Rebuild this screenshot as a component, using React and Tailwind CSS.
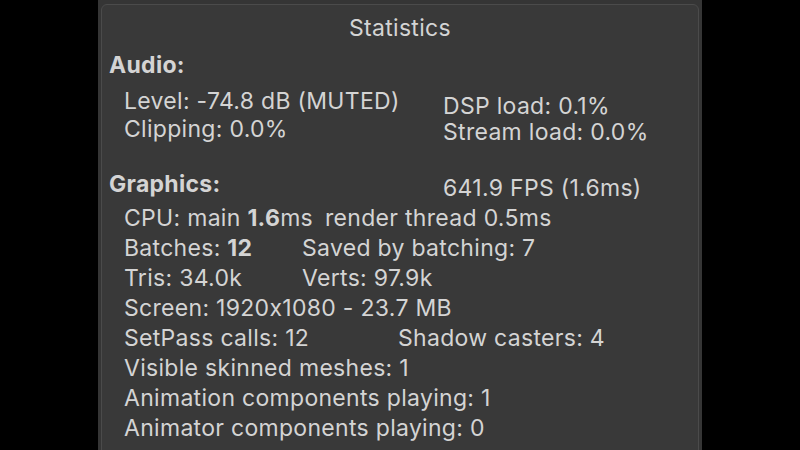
const Row = ({ children, className = "" }) => (
  <div className={`flex whitespace-nowrap ${className}`}>{children}</div>
);

const App = () => {
  return (
    <div className="h-[450px] w-[800px] bg-black overflow-hidden">
      <div className="mx-auto h-full w-[604px] bg-[#353535] px-[3px] pt-[4px]">
        <div
          className="h-[460px] rounded-[6px] border border-[#4b4b4b] bg-[#393939] text-[#d4d4d4] text-[23px] tracking-[0.3px] [font-feature-settings:'calt'_0]"
          style={{ fontFamily: "Inter, 'Noto Sans', sans-serif" }}
        >
          <div className="text-center leading-[44px] pt-[1px]">Statistics</div>

          <div className="pl-[7px] font-bold leading-[34px] -mt-[2px]">Audio:</div>
          <div className="flex pl-[22px] pt-[5px]">
            <div className="w-[319px] leading-[28px]">
              <Row>Level: -74.8 dB (MUTED)</Row>
              <Row>Clipping: 0.0%</Row>
            </div>
            <div className="pt-[6px] leading-[26px]">
              <Row>DSP load: 0.1%</Row>
              <Row>Stream load: 0.0%</Row>
            </div>
          </div>

          <div className="flex mt-[24px] leading-[30px]">
            <div className="pl-[7px] font-bold w-[341px]">Graphics:</div>
            <div className="pt-[4px]">641.9 FPS (1.6ms)</div>
          </div>
          <div className="pl-[22px] leading-[30px]">
            <Row>
              <span>
                CPU: main <span className="font-bold">1.6</span>ms
              </span>
              <span className="ml-[12px]">render thread 0.5ms</span>
            </Row>
            <Row>
              <span className="w-[178px]">
                Batches: <span className="font-bold">12</span>
              </span>
              <span>Saved by batching: 7</span>
            </Row>
            <Row>
              <span className="w-[178px]">Tris: 34.0k</span>
              <span>Verts: 97.9k</span>
            </Row>
            <Row>Screen: 1920x1080 - 23.7 MB</Row>
            <Row>
              <span className="w-[274px]">SetPass calls: 12</span>
              <span>Shadow casters: 4</span>
            </Row>
            <Row>Visible skinned meshes: 1</Row>
            <Row>Animation components playing: 1</Row>
            <Row>Animator components playing: 0</Row>
          </div>
        </div>
      </div>
    </div>
  );
};

export default App;
